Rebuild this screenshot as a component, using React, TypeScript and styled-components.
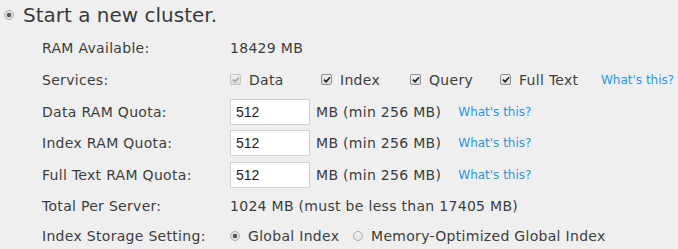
import React from "react";
import styled, { createGlobalStyle } from "styled-components";

const GlobalStyle = createGlobalStyle`
  html, body {
    margin: 0;
    padding: 0;
    background: #efefef;
  }
  body {
    font-family: "DejaVu Sans", Verdana, sans-serif;
    color: #3d3d3d;
  }
`;

const Page = styled("div")`
  width: 678px;
  height: 249px;
  overflow: hidden;
  padding: 4px 0 0 4px;
  box-sizing: border-box;
`;

const Heading = styled("div")`
  display: flex;
  align-items: center;
  gap: 9px;
  font-size: 20px;
  color: #3a3a3a;
  height: 22px;
`;

const RadioDot = styled("span")<{ $on?: boolean }>`
  flex: none;
  width: 10px;
  height: 10px;
  border-radius: 50%;
  box-sizing: border-box;
  border: 1px solid #a9a9a9;
  background: ${(p) =>
    p.$on
      ? "radial-gradient(circle, #555 0 2px, #e4e4e4 2.6px)"
      : "linear-gradient(#f4f4f4, #e2e2e2)"};
`;

const Form = styled("div")`
  display: flex;
  flex-direction: column;
  padding: 7px 0 0 38px;
`;

const Row = styled("div")<{ $h: number }>`
  display: flex;
  align-items: center;
  height: ${(p) => p.$h}px;
  font-size: 14px;
  letter-spacing: 0.3px;
`;

const Label = styled("div")`
  width: 188px;
  flex: none;
`;

const Value = styled("div")`
  display: flex;
  align-items: center;
`;

const Service = styled("div")<{ $w: number }>`
  display: flex;
  align-items: center;
  gap: 8px;
  width: ${(p) => p.$w}px;
`;

const Box = styled("span")<{ $off?: boolean }>`
  flex: none;
  display: flex;
  align-items: center;
  justify-content: center;
  width: 11px;
  height: 11px;
  box-sizing: border-box;
  border: 1px solid ${(p) => (p.$off ? "#c4c4c4" : "#8e8e8e")};
  border-radius: 2px;
  background: linear-gradient(#f2f2f2, #dcdcdc);
  color: ${(p) => (p.$off ? "#a8a8a8" : "#222")};
`;

const Help = styled("span")`
  color: #2a97dc;
  font-size: 12px;
  letter-spacing: 0;
  cursor: pointer;
`;

const Quota = styled("input")`
  width: 80px;
  height: 26px;
  box-sizing: border-box;
  border: 1px solid #cfd3d6;
  background: #fff;
  padding: 0 5px;
  font-family: "Liberation Sans", Arial, sans-serif;
  font-size: 14px;
  color: #222;
  outline: none;
`;

const Unit = styled("span")`
  margin: 0 17px 0 6px;
`;

const Choice = styled("div")<{ $w: number }>`
  display: flex;
  align-items: center;
  gap: 8px;
  width: ${(p) => p.$w}px;
`;

const Check = ({ off }: { off?: boolean }) => (
  <Box $off={off}>
    <svg width="8" height="7" viewBox="0 0 8 7">
      <path d="M1 3.6 L3.1 5.7 L7 1.2" fill="none" stroke="currentColor" strokeWidth="1.7" />
    </svg>
  </Box>
);

const quotas = [
  { label: "Data RAM Quota:", value: "512" },
  { label: "Index RAM Quota:", value: "512" },
  { label: "Full Text RAM Quota:", value: "512" },
];

const services = [
  { name: "Data", w: 91, disabled: true },
  { name: "Index", w: 89 },
  { name: "Query", w: 90 },
  { name: "Full Text", w: 101 },
];

export default function App() {
  return (
    <>
      <GlobalStyle />
      <Page>
        <Heading>
          <RadioDot $on />
          Start a new cluster.
        </Heading>
        <Form>
          <Row $h={30}>
            <Label>RAM Available:</Label>
            <Value>18429 MB</Value>
          </Row>
          <Row $h={33}>
            <Label>Services:</Label>
            <Value>
              {services.map((s) => (
                <Service key={s.name} $w={s.w}>
                  <Check off={s.disabled} />
                  {s.name}
                </Service>
              ))}
              <Help>What's this?</Help>
            </Value>
          </Row>
          {quotas.map((q) => (
            <Row $h={31.5} key={q.label}>
              <Label>{q.label}</Label>
              <Value>
                <Quota defaultValue={q.value} />
                <Unit>MB (min 256 MB)</Unit>
                <Help>What's this?</Help>
              </Value>
            </Row>
          ))}
          <Row $h={30}>
            <Label>Total Per Server:</Label>
            <Value>1024 MB (must be less than 17405 MB)</Value>
          </Row>
          <Row $h={31}>
            <Label>Index Storage Setting:</Label>
            <Value>
              <Choice $w={123}>
                <RadioDot $on />
                Global Index
              </Choice>
              <Choice $w={260}>
                <RadioDot />
                Memory-Optimized Global Index
              </Choice>
            </Value>
          </Row>
        </Form>
      </Page>
    </>
  );
}
